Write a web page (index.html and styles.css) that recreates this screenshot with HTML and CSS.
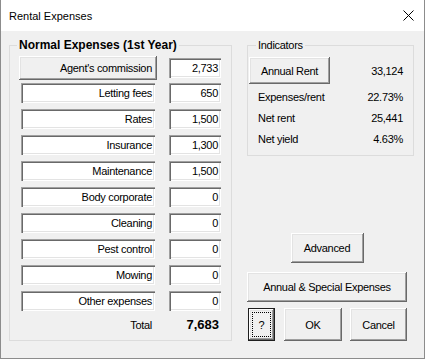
FILE: index.html
```html
<!DOCTYPE html>
<html lang="en">
<head>
	<meta charset="UTF-8">
	<title>Rental Expenses</title>
	<link rel="stylesheet" href="styles.css">
</head>
<body>
	<div id="dialog">
		<div class="title_bar">
			<span class="title_text">Rental Expenses</span>
			<span class="title_close">
				<svg width="11" height="11" viewBox="0 0 11 11"><path d="M0.5 0.5L10.5 10.5M10.5 0.5L0.5 10.5" stroke="#000" stroke-width="1" fill="none"/></svg>
			</span>
		</div>
		<div class="dialog_body">
			<fieldset class="group group_exp">
				<legend>Normal Expenses (1st Year)</legend>
				<div class="exp_row exp_row_first">
					<button class="btn btn_agent">Agent's commission</button>
					<span class="field field_value">2,733</span>
				</div>
				<div class="exp_row">
					<span class="field field_label">Letting fees</span>
					<span class="field field_value">650</span>
				</div>
				<div class="exp_row">
					<span class="field field_label">Rates</span>
					<span class="field field_value">1,500</span>
				</div>
				<div class="exp_row">
					<span class="field field_label">Insurance</span>
					<span class="field field_value">1,300</span>
				</div>
				<div class="exp_row">
					<span class="field field_label">Maintenance</span>
					<span class="field field_value">1,500</span>
				</div>
				<div class="exp_row">
					<span class="field field_label">Body corporate</span>
					<span class="field field_value">0</span>
				</div>
				<div class="exp_row">
					<span class="field field_label">Cleaning</span>
					<span class="field field_value">0</span>
				</div>
				<div class="exp_row">
					<span class="field field_label">Pest control</span>
					<span class="field field_value">0</span>
				</div>
				<div class="exp_row">
					<span class="field field_label">Mowing</span>
					<span class="field field_value">0</span>
				</div>
				<div class="exp_row">
					<span class="field field_label">Other expenses</span>
					<span class="field field_value">0</span>
				</div>
				<div class="exp_total">
					<span class="total_label">Total</span>
					<span class="total_value">7,683</span>
				</div>
			</fieldset>
			<div class="side">
				<fieldset class="group group_ind">
					<legend>Indicators</legend>
					<div class="ind_row ind_row_first">
						<button class="btn btn_rent">Annual Rent</button>
						<span class="ind_value">33,124</span>
					</div>
					<div class="ind_row ind_row_second">
						<span class="ind_label">Expenses/rent</span>
						<span class="ind_value">22.73%</span>
					</div>
					<div class="ind_row">
						<span class="ind_label">Net rent</span>
						<span class="ind_value">25,441</span>
					</div>
					<div class="ind_row">
						<span class="ind_label">Net yield</span>
						<span class="ind_value">4.63%</span>
					</div>
				</fieldset>
				<div class="actions">
					<button class="btn btn_adv">Advanced</button>
					<button class="btn btn_special">Annual &amp; Special Expenses</button>
					<div class="actions_bottom">
						<button class="btn btn_help"><span class="focus_rect">?</span></button>
						<button class="btn btn_ok">OK</button>
						<button class="btn btn_cancel">Cancel</button>
					</div>
				</div>
			</div>
		</div>
	</div>
</body>
</html>
```

FILE: styles.css
```css
*{box-sizing:border-box}
body{
	margin:0;
	font-family:"Liberation Sans",Arial,sans-serif;
	font-size:11px;
	letter-spacing:-0.3px;
	color:#000;
	background:#fff;
}

#dialog{
	width:425px;
	height:359px;
	border:1px solid #8c8c8c;
	border-top:none;
	display:flex;
	flex-direction:column;
	background:#f0f0f0;
}

/* title */
.title_bar{
	height:31px;
	flex:none;
	background:#fff;
	display:flex;
	align-items:center;
	justify-content:space-between;
	padding:0 10px 0 8px;
}
.title_text{
	font-size:11px;
	letter-spacing:0;
	color:#000;
}
.title_close{
	width:11px;
	height:11px;
	display:flex;
}

.dialog_body{
	flex:1;
	display:flex;
	gap:15px;
	padding:7px 0 17px 8px;
}

/* group boxes */
.group{
	margin:0;
	border:1px solid #dcdcdc;
	min-width:0;
}
.group legend{
	padding:0 2px;
	margin-left:-2px;
	line-height:14px;
}
.group_exp{
	width:223px;
	padding:4px 10px 6px 9px;
}
.group_exp legend{
	font-weight:bold;
	font-size:12px;
	letter-spacing:0;
}

.exp_row{
	display:grid;
	grid-template-columns:138px 52px;
	column-gap:12px;
	height:20px;
	margin-bottom:6px;
}
.exp_row_first{
	height:24px;
	margin-bottom:3px;
}

.field{
	height:20px;
	line-height:20px;
	text-align:right;
	background:#fff;
	white-space:nowrap;
	box-shadow:inset 1px 1px #a0a0a0, inset 2px 2px #696969, inset -1px -1px #fff, inset -2px -2px #e3e3e3;
}
.field_label{
	margin:0 2px;
	padding-right:3px;
}
.field_value{
	align-self:center;
	padding-right:3px;
}

.exp_total{
	display:grid;
	grid-template-columns:138px 52px;
	column-gap:12px;
	height:16px;
	line-height:16px;
}
.total_label{
	text-align:right;
	padding-right:5px;
}
.total_value{
	text-align:right;
	padding-right:2px;
	font-weight:bold;
	font-size:13px;
	letter-spacing:0;
}

/* buttons */
.btn{
	font:inherit;
	letter-spacing:inherit;
	color:#000;
	background:#f0f0f0;
	border:none;
	margin:0;
	padding:0;
	box-shadow:inset -1px -1px #696969, inset 1px 1px #fff, inset -2px -2px #a0a0a0, inset 2px 2px #e3e3e3;
}
.btn_agent{
	height:24px;
	text-align:right;
	padding-right:5px;
}

/* indicators */
.side{
	display:flex;
	flex-direction:column;
	width:167px;
}
.group_ind{
	padding:5px 10px 6px 1px;
}
.group_ind legend{
	margin-left:7px;
}
.ind_row{
	display:flex;
	justify-content:space-between;
	align-items:center;
	height:21px;
}
.ind_row_first{
	height:27px;
}
.ind_row_second{
	margin-top:2px;
}
.btn_rent{
	width:81px;
	height:27px;
}
.ind_label{
	padding-left:9px;
}

.actions{
	margin-top:auto;
	width:160px;
	display:flex;
	flex-direction:column;
}
.btn_adv{
	align-self:center;
	width:73px;
	height:30px;
	margin-bottom:9px;
}
.btn_special{
	height:30px;
	margin-bottom:6px;
}
.actions_bottom{
	display:flex;
	height:33px;
	padding-left:1px;
}
.btn_help{
	width:27px;
	margin-right:9px;
	border:1px solid #1e1e1e;
	padding:3px;
	display:flex;
}
.focus_rect{
	flex:1;
	border:1px dotted #000;
	display:flex;
	align-items:center;
	justify-content:center;
}
.btn_ok{
	width:58px;
	margin-right:8px;
}
.btn_cancel{
	width:57px;
}
```
